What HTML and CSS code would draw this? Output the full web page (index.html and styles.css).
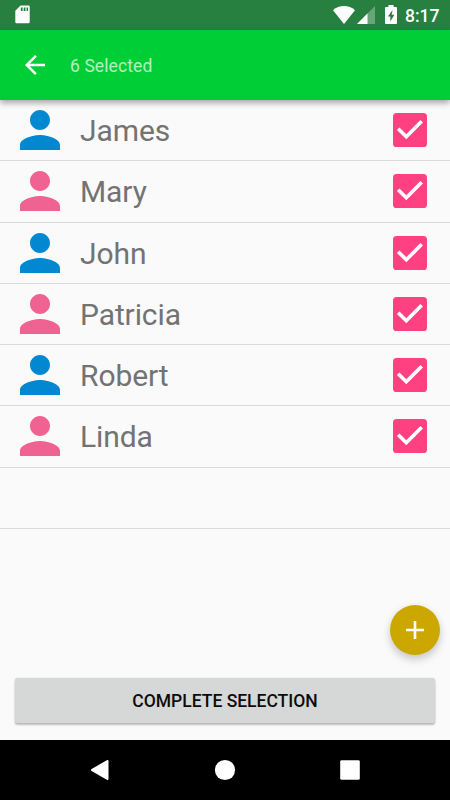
FILE: index.html
```html
<!DOCTYPE html>
<html lang="en">
<head>
<meta charset="utf-8">
<title>Select contacts</title>
<link rel="stylesheet" href="styles.css">
</head>
<body>
<svg class="defs" aria-hidden="true">
  <symbol id="person" viewBox="4 4 16 16">
    <path d="M12 12c2.21 0 4-1.79 4-4s-1.79-4-4-4-4 1.79-4 4 1.79 4 4 4zm0 2c-2.67 0-8 1.34-8 4v2h16v-2c0-2.66-5.33-4-8-4z"/>
  </symbol>
  <symbol id="checked" viewBox="0 0 34 34">
    <rect width="34" height="34" rx="3.6" fill="#ff4081"/>
    <path d="M5.2 15.7 13.3 23.8 28.7 8.3" fill="none" stroke="#fff" stroke-width="3.6"/>
  </symbol>
</svg>
<div class="screen">
  <header class="status">
    <svg class="sd" viewBox="0 0 15 19"><path d="M5.6.5H13.5Q14.7.5 14.7 1.7V17Q14.7 18.3 13.5 18.3H1.5Q.3 18.3.3 17V5.8Z" fill="#fff"/><path d="M5.8 2.4h1.8v3.5H5.8zM8.7 2.4h1.8v3.5H8.7zM11.6 2.4h1.4v3.5h-1.4z" fill="#27803f"/></svg>
    <div class="status-right">
      <svg class="wifi" viewBox="0 0 22 18"><path d="M0 4.2Q4.8 0 11 0T22 4.2L11 18Z" fill="#fff"/></svg>
      <svg class="signal" viewBox="0 0 18 18"><path d="M0 18 18 0V18Z" fill="#fff" opacity=".3"/><path d="M0 18 10.5 7.5V18Z" fill="#fff"/></svg>
      <svg class="battery" viewBox="0 0 12 19"><path d="M3.4 0h5.2v1.9H11Q12 1.9 12 2.9V18Q12 19 11 19H1Q0 19 0 18V2.9Q0 1.9 1 1.9H3.4Z" fill="#fff"/><path d="M7.5 5 2.9 11.5h2.4V16.5L9.4 9.8H6.7Z" fill="#27803f"/></svg>
      <span class="clock">8:17</span>
    </div>
  </header>
  <div class="toolbar">
    <svg class="back" viewBox="4 4 16 16"><path d="M20 11H7.83l5.59-5.59L12 4l-8 8 8 8 1.41-1.41L7.83 13H20v-2z" fill="#fff"/></svg>
    <span class="title">6 Selected</span>
  </div>
  <main class="content">
    <ul class="list">
      <li class="row"><svg class="avatar blue"><use href="#person"/></svg><span class="name">James</span><svg class="check"><use href="#checked"/></svg></li>
      <li class="row"><svg class="avatar pink"><use href="#person"/></svg><span class="name">Mary</span><svg class="check"><use href="#checked"/></svg></li>
      <li class="row"><svg class="avatar blue"><use href="#person"/></svg><span class="name">John</span><svg class="check"><use href="#checked"/></svg></li>
      <li class="row"><svg class="avatar pink"><use href="#person"/></svg><span class="name">Patricia</span><svg class="check"><use href="#checked"/></svg></li>
      <li class="row"><svg class="avatar blue"><use href="#person"/></svg><span class="name">Robert</span><svg class="check"><use href="#checked"/></svg></li>
      <li class="row"><svg class="avatar pink"><use href="#person"/></svg><span class="name">Linda</span><svg class="check"><use href="#checked"/></svg></li>
      <li class="row"></li>
    </ul>
    <button class="fab" aria-label="Add"><svg viewBox="0 0 18 18"><path d="M9 0V18M0 9H18" stroke="#fff" stroke-width="2.6"/></svg></button>
    <button class="complete">COMPLETE SELECTION</button>
  </main>
  <nav class="nav">
    <svg viewBox="0 0 20 20"><path d="M1.6 9 16.8.3Q18.5-.4 18.5 1.2V18.8Q18.5 20.4 16.8 19.7L1.6 11Q.2 10 1.6 9Z" fill="#fff"/></svg>
    <svg viewBox="0 0 20 20"><circle cx="10" cy="10" r="10.1" fill="#fff"/></svg>
    <svg viewBox="0 0 20 20"><rect x=".2" y=".2" width="19.6" height="19.6" rx="1.4" fill="#fff"/></svg>
  </nav>
</div>
</body>
</html>
```
FILE: styles.css
```css
* { box-sizing: border-box; }
body { margin: 0; font-family: Roboto, sans-serif; }
svg { display: block; overflow: visible; flex: none; }
.defs { position: absolute; width: 0; height: 0; }
button { border: 0; padding: 0; font: inherit; }
.screen {
  width: 450px;
  height: 800px;
  display: flex;
  flex-direction: column;
  overflow: hidden;
  background: #fafafa;
}
.status {
  height: 30px;
  flex: none;
  display: flex;
  justify-content: space-between;
  padding: 0 10px 0 15px;
  background: #27803f;
}
.sd { width: 15px; height: 19px; margin-top: 5px; }
.status-right { display: flex; }
.wifi { width: 22px; height: 18px; margin: 6px 2px 0 0; }
.signal { width: 18px; height: 18px; margin: 6px 10px 0 0; }
.battery { width: 12px; height: 19px; margin: 5px 8px 0 0; }
.clock { width: 35px; font-size: 17.5px; line-height: 32px; font-weight: 500; color: #fff; white-space: nowrap; }
.toolbar {
  height: 70px;
  flex: none;
  display: flex;
  align-items: center;
  gap: 25px;
  padding-left: 25px;
  background: #00ce37;
  box-shadow: 0 3px 6px rgba(0, 0, 0, .34);
  z-index: 1;
}
.back { width: 20px; height: 20px; }
.title { font-size: 17.5px; line-height: 24px; letter-spacing: .1px; color: #b3f0c3; padding-top: 2px; }
.content { position: relative; flex: 1; display: flex; flex-direction: column; }
.list { margin: 0; padding: 0; list-style: none; }
.row {
  height: 61.25px;
  display: flex;
  align-items: center;
  padding: 0 23px 0 20px;
  border-bottom: 1px solid #d9d9d9;
}
.avatar { width: 40px; height: 40px; margin-right: 20px; }
.blue { fill: #0288d1; }
.pink { fill: #f06292; }
.name { flex: 1; font-size: 30px; line-height: 40px; letter-spacing: -.1px; color: #737373; padding-top: 2px; }
.check { width: 34px; height: 34px; }
.fab {
  position: absolute;
  right: 10px;
  bottom: 85px;
  width: 50px;
  height: 50px;
  border-radius: 50%;
  background: #cca700;
  display: flex;
  align-items: center;
  justify-content: center;
  box-shadow: 0 5px 8px rgba(0, 0, 0, .17), 0 1px 8px rgba(0, 0, 0, .06);
}
.fab svg { width: 18px; height: 18px; }
.complete {
  height: 45px;
  margin: auto 15px 17px;
  border-radius: 2.5px;
  background: #d6d7d7;
  font-size: 17.5px;
  font-weight: 500;
  line-height: 47px;
  color: #0c0c0c;
  box-shadow: 0 2px 2px rgba(0, 0, 0, .24), 0 0 2px rgba(0, 0, 0, .12);
}
.nav {
  height: 60px;
  flex: none;
  display: flex;
  justify-content: center;
  align-items: center;
  gap: 105px;
  background: #000;
}
.nav svg { width: 20px; height: 20px; }
```
